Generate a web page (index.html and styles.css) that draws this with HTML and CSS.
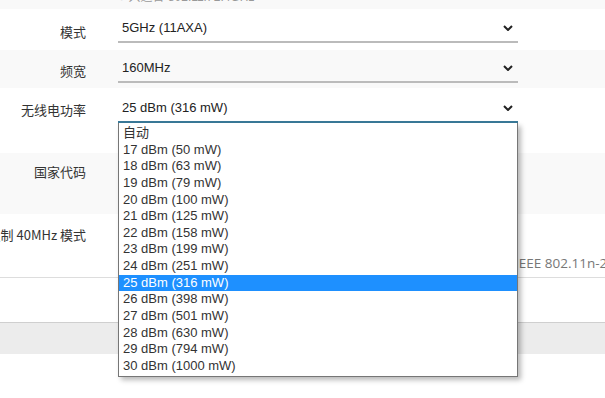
FILE: index.html
```html
<!DOCTYPE html>
<html lang="zh-CN">
<head>
<meta charset="utf-8">
<title>无线设置</title>
<link rel="stylesheet" href="styles.css">
</head>
<body>
<div class="page">
  <div class="strip">
    <div class="label"></div>
    <div class="field"><span class="hint">● 只适合 802.11n 2.4GHz</span></div>
  </div>

  <div class="row row-a">
    <div class="label">模式</div>
    <div class="field">
      <div class="select"><span class="val">5GHz (11AXA)</span><svg class="chev" viewBox="0 0 10 6" width="10" height="6"><polyline points="1,1 5,5 9,1"/></svg></div>
    </div>
  </div>

  <div class="row row-b">
    <div class="label">频宽</div>
    <div class="field">
      <div class="select"><span class="val">160MHz</span><svg class="chev" viewBox="0 0 10 6" width="10" height="6"><polyline points="1,1 5,5 9,1"/></svg></div>
    </div>
  </div>

  <div class="row row-c">
    <div class="label">无线电功率</div>
    <div class="field">
      <div class="select focused"><span class="val">25 dBm (316 mW)</span><svg class="chev" viewBox="0 0 10 6" width="10" height="6"><polyline points="1,1 5,5 9,1"/></svg>
        <ul class="listbox">
          <li>自动</li>
          <li>17 dBm (50 mW)</li>
          <li>18 dBm (63 mW)</li>
          <li>19 dBm (79 mW)</li>
          <li>20 dBm (100 mW)</li>
          <li>21 dBm (125 mW)</li>
          <li>22 dBm (158 mW)</li>
          <li>23 dBm (199 mW)</li>
          <li>24 dBm (251 mW)</li>
          <li class="sel">25 dBm (316 mW)</li>
          <li>26 dBm (398 mW)</li>
          <li>27 dBm (501 mW)</li>
          <li>28 dBm (630 mW)</li>
          <li>29 dBm (794 mW)</li>
          <li>30 dBm (1000 mW)</li>
        </ul>
      </div>
    </div>
  </div>

  <div class="row row-b row-d">
    <div class="label">国家代码</div>
    <div class="field">
      <div class="select"><span class="val">00 - 全球</span><svg class="chev" viewBox="0 0 10 6" width="10" height="6"><polyline points="1,1 5,5 9,1"/></svg></div>
    </div>
  </div>

  <div class="row row-e">
    <div class="label">强制 40MHz 模式</div>
    <div class="field">
      <div class="check"></div>
      <div class="desc"><span class="desc-lead">● 即使检测到重叠的 BSS 也始终使用 40MHz 信道，将会违反</span>IEEE 802.11n-2009</div>
    </div>
  </div>

  <div class="spacer"></div>
  <div class="band"></div>
</div>
</body>
</html>
```

FILE: styles.css
```css
html, body {
  margin: 0;
  padding: 0;
  overflow: hidden;
  background: #fff;
}

body {
  width: 605px;
  height: 398px;
  font-family: "Liberation Sans", Arial, "Noto Sans CJK SC", sans-serif;
  font-size: 13px;
  color: #333;
}

.page {
  display: flex;
  flex-direction: column;
}

.strip {
  height: 9px;
  background: #f9f9f9;
  display: flex;
  align-items: flex-end;
  column-gap: 32px;
  overflow: hidden;
}

.strip .field {
  padding-bottom: 5px;
}

.hint {
  display: block;
  font-size: 12px;
  line-height: 14px;
  color: #999;
  white-space: nowrap;
}

.row {
  display: flex;
  align-items: flex-start;
  column-gap: 32px;
  box-sizing: border-box;
}

.label {
  width: 86px;
  flex: none;
  display: flex;
  justify-content: flex-end;
  white-space: nowrap;
  font-family: "Noto Sans CJK SC", "Liberation Sans", sans-serif;
  font-size: 13px;
  line-height: 27px;
  padding-top: 3px;
  color: #333;
}

.field {
  width: 400px;
  flex: none;
}

.row-a { height: 41px; padding-top: 5px; background: #fff; }
.row-a .label { padding-top: 4px; }
.row-b { height: 38px; padding-top: 4px; background: #f9f9f9; }
.row-c { height: 65px; padding-top: 6px; background: #fff; }
.row-c .label { padding-top: 2px; }
.row-d { height: 61px; padding-top: 4px; }
.row-d .label { padding-top: 1px; }
.row-e {
  height: 64px;
  padding-top: 5px;
  background: #fff;
  border-bottom: 1px solid #ddd;
}
.row-e .label { padding-top: 2px; }

.select {
  position: relative;
  height: 27px;
  border-bottom: 2px solid #bbb;
  display: flex;
  align-items: center;
  justify-content: space-between;
  padding: 0 5px 0 4px;
  color: #222;
  line-height: 27px;
}

.select.focused {
  border-bottom-color: #3a7a99;
}

.val {
  white-space: nowrap;
  font-family: "Liberation Sans", Arial, "Noto Sans CJK SC", sans-serif;
}

.chev {
  flex: none;
  margin-top: 1px;
}

.chev polyline {
  fill: none;
  stroke: #222;
  stroke-width: 2;
}

.listbox {
  position: absolute;
  left: 0;
  top: calc(100% + 2px);
  width: 400px;
  height: 254px;
  box-sizing: border-box;
  margin: 0;
  padding: 2px 0 0;
  list-style: none;
  background: #fff;
  border: 1px solid #767676;
  border-top: none;
  box-shadow: 3px 3px 5px rgba(0, 0, 0, 0.28);
  z-index: 10;
}

.listbox li {
  height: 16.64px;
  line-height: 16.64px;
  padding-left: 4px;
  white-space: nowrap;
  color: #333;
  font-family: "Liberation Sans", Arial, "Noto Sans CJK SC", sans-serif;
}

.listbox li.sel {
  background: #1e90ff;
  color: #fff;
}

.check {
  height: 27px;
}

.desc {
  margin-top: 8px;
  white-space: nowrap;
  font-family: "Open Sans", "Noto Sans CJK SC", sans-serif;
  font-size: 13.5px;
  line-height: 18px;
  color: #777;
}

.desc-lead {
  display: inline-block;
  width: 397px;
  overflow: hidden;
  vertical-align: top;
}

.spacer {
  height: 44px;
}

.band {
  height: 31px;
  background: #ececec;
  border-top: 1px solid #cfcfcf;
}
```
